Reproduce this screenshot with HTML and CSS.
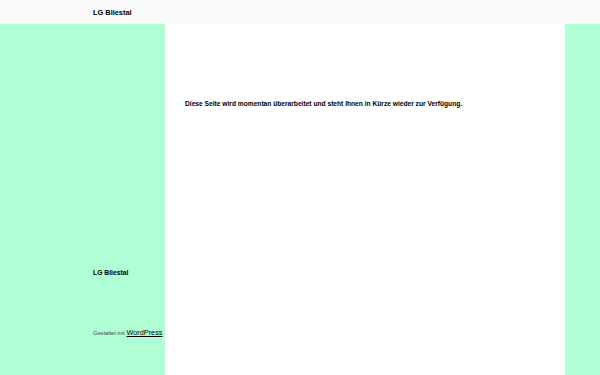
FILE: index.html
```html
<!DOCTYPE html>
<html lang="de">
<head>
    <meta charset="UTF-8">
    <meta name="viewport" content="width=device-width, initial-scale=1.0">
    <title>LG Bliestal</title>
    <link rel="stylesheet" href="styles.css">
</head>
<body>
    <header class="site-header">
        <a class="site-title" href="#">LG Bliestal</a>
    </header>
    <div class="layout">
        <aside class="sidebar">
            <div class="footer-info">
                <p class="footer-title">LG Bliestal</p>
                <p class="credit">Gestaltet mit <a href="#">WordPress</a></p>
            </div>
        </aside>
        <main class="content">
            <p class="notice">Diese Seite wird momentan überarbeitet und steht Ihnen in Kürze wieder zur Verfügung.</p>
        </main>
        <div class="right-strip"></div>
    </div>
</body>
</html>
```

FILE: styles.css
```css
html, body {
    margin: 0;
    padding: 0;
    height: 100%;
}
body {
    font-family: "Liberation Sans", Arial, sans-serif;
    color: #000;
    background: #b0ffd4;
    display: flex;
    flex-direction: column;
}
.site-header {
    height: 24px;
    background: #f9f9f9;
    display: flex;
    align-items: center;
    padding-left: 93px;
}
.site-title {
    font-size: 7.4px;
    font-weight: 700;
    color: #000;
    text-decoration: none;
}
.layout {
    flex: 1;
    display: grid;
    grid-template-columns: 165px 400px 1fr;
}
.sidebar {
    background: #b0ffd4;
    padding-left: 93px;
}
.footer-info {
    padding-top: 245px;
    width: 80px;
}
.footer-title {
    margin: 0;
    font-size: 6.8px;
    font-weight: 700;
}
.credit {
    margin: 52px 0 0;
    font-size: 5.7px;
    color: #444;
    white-space: nowrap;
}
.credit a {
    color: #000;
    font-size: 7.3px;
}
.content {
    background: #fff;
    padding: 76px 20px 0;
}
.notice {
    margin: 0;
    font-size: 6.65px;
    font-weight: 700;
}
.right-strip {
    background: #b0ffd4;
}
```
